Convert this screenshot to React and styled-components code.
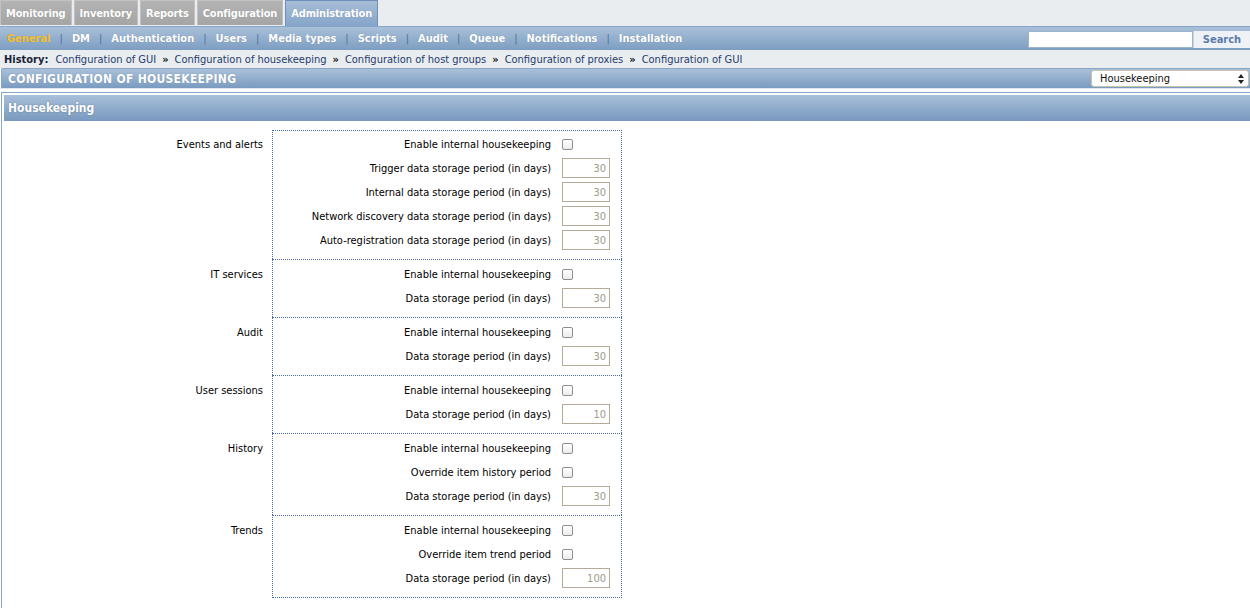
import React from "react"
import styled, { createGlobalStyle } from "styled-components"

const GlobalStyle = createGlobalStyle`
    html, body {
        margin: 0;
        padding: 0;
        background: #ffffff;
        font-family: Tahoma, "DejaVu Sans Condensed", "Liberation Sans", sans-serif;
        font-size: 11px;
        color: #000;
    }
`

const TABS = ["Monitoring", "Inventory", "Reports", "Configuration", "Administration"]
const SUBMENU = ["General", "DM", "Authentication", "Users", "Media types", "Scripts", "Audit", "Queue", "Notifications", "Installation"]
const HISTORY = ["Configuration of GUI", "Configuration of housekeeping", "Configuration of host groups", "Configuration of proxies", "Configuration of GUI"]

const SECTIONS = [
    {
        name: "Events and alerts",
        rows: [
            { label: "Enable internal housekeeping", check: true },
            { label: "Trigger data storage period (in days)", value: "30" },
            { label: "Internal data storage period (in days)", value: "30" },
            { label: "Network discovery data storage period (in days)", value: "30" },
            { label: "Auto-registration data storage period (in days)", value: "30" },
        ],
    },
    {
        name: "IT services",
        rows: [
            { label: "Enable internal housekeeping", check: true },
            { label: "Data storage period (in days)", value: "30" },
        ],
    },
    {
        name: "Audit",
        rows: [
            { label: "Enable internal housekeeping", check: true },
            { label: "Data storage period (in days)", value: "30" },
        ],
    },
    {
        name: "User sessions",
        rows: [
            { label: "Enable internal housekeeping", check: true },
            { label: "Data storage period (in days)", value: "10" },
        ],
    },
    {
        name: "History",
        rows: [
            { label: "Enable internal housekeeping", check: true },
            { label: "Override item history period", check: true },
            { label: "Data storage period (in days)", value: "30" },
        ],
    },
    {
        name: "Trends",
        rows: [
            { label: "Enable internal housekeeping", check: true },
            { label: "Override item trend period", check: true },
            { label: "Data storage period (in days)", value: "100" },
        ],
    },
]

export default function App() {
    return (
        <Page>
            <GlobalStyle />
            <TopTabs>
                {TABS.map(t => (
                    <Tab key={t} active={t === "Administration"}>{t}</Tab>
                ))}
            </TopTabs>
            <SubBar>
                <SubMenu>
                    {SUBMENU.map((s, i) => (
                        <React.Fragment key={s}>
                            {i > 0 && <Sep>|</Sep>}
                            <SubItem active={s === "General"}>{s}</SubItem>
                        </React.Fragment>
                    ))}
                </SubMenu>
                <SearchBox>
                    <SearchInput />
                    <SearchButton>Search</SearchButton>
                </SearchBox>
            </SubBar>
            <HistoryRow>
                <HistoryTitle>History:</HistoryTitle>
                {HISTORY.map((h, i) => (
                    <React.Fragment key={i}>
                        {i > 0 && <Arrow>»</Arrow>}
                        <HistoryLink>{h}</HistoryLink>
                    </React.Fragment>
                ))}
            </HistoryRow>
            <HeaderBar>
                <HeaderTitle>CONFIGURATION OF HOUSEKEEPING</HeaderTitle>
                <FakeSelect>
                    <span>Housekeeping</span>
                    <SelectArrows viewBox="0 0 6 10" width="6" height="10">
                        <path d="M3 0 L6 4 L0 4 Z" fill="#222" />
                        <path d="M3 10 L6 6 L0 6 Z" fill="#222" />
                    </SelectArrows>
                </FakeSelect>
            </HeaderBar>
            <Content>
                <Panel>
                    <PanelHeader>Housekeeping</PanelHeader>
                    <Form>
                        {SECTIONS.map((sec, si) => (
                            <Section key={sec.name}>
                                <SectionName first={si === 0}>{sec.name}</SectionName>
                                <SectionBox first={si === 0} last={si === SECTIONS.length - 1}>
                                    {sec.rows.map((r, ri) => (
                                        <Row key={ri}>
                                            <RowLabel>{r.label}</RowLabel>
                                            {r.check ? <CheckBox /> : <NumInput>{r.value}</NumInput>}
                                        </Row>
                                    ))}
                                </SectionBox>
                            </Section>
                        ))}
                    </Form>
                </Panel>
            </Content>
        </Page>
    )
}

const Page = styled.div`
    width: 1250px;
    height: 608px;
    overflow: hidden;
    background: #ffffff;
`
const TopTabs = styled.div`
    display: flex;
    height: 26px;
    background: #e9edf0;
    gap: 2px;
`
const Tab = styled.div`
    display: flex;
    align-items: center;
    height: ${props => props.active ? "26px" : "25px"};
    padding: 0 5px;
    font-weight: bold;
    letter-spacing: -0.15px;
    color: #ffffff;
    text-shadow: 0 0 1px rgba(0, 0, 0, 0.15);
    background: ${props => props.active
        ? "linear-gradient(#a6bdd6, #86a5c9)"
        : "linear-gradient(#b3b3b3, #a5a5a5)"};
    border: 1px solid ${props => props.active ? "#6f90b8" : "#c2c2c2"};
    border-bottom: none;
    box-sizing: border-box;
`
const SubBar = styled.div`
    display: flex;
    align-items: center;
    justify-content: space-between;
    height: 24px;
    background: linear-gradient(#a9c0d9, #7d9dc1);
    border-top: 1px solid #86a5c9;
    box-sizing: border-box;
`
const SubMenu = styled.div`
    display: flex;
    align-items: center;
    padding-left: 7px;
`
const SubItem = styled.span`
    font-weight: bold;
    color: ${props => props.active ? "#f5c22e" : "#ffffff"};
    text-shadow: 0 0 1px rgba(0, 0, 0, 0.2);
`
const Sep = styled.span`
    color: #4d6f9d;
    margin: 0 9px;
`
const SearchBox = styled.div`
    display: flex;
    height: 17px;
    margin-top: 1px;
`
const SearchInput = styled.div`
    width: 165px;
    background: #ffffff;
    border: 1px solid #9eb3cc;
    box-sizing: border-box;
`
const SearchButton = styled.div`
    width: 56px;
    display: flex;
    align-items: center;
    justify-content: center;
    background: #eef1f5;
    color: #5a7bab;
    font-weight: bold;
    border-left: 1px solid #c9d4e0;
`
const HistoryRow = styled.div`
    display: flex;
    align-items: center;
    height: 18px;
    padding-left: 4px;
    background: #e9edf0;
    color: #1f2f5c;
`
const HistoryTitle = styled.span`
    font-weight: bold;
    color: #1a1f3a;
    margin-right: 7px;
`
const HistoryLink = styled.span`
    color: #253a6e;
`
const Arrow = styled.span`
    font-weight: bold;
    margin: 0 6px;
    color: #111;
`
const HeaderBar = styled.div`
    display: flex;
    align-items: center;
    justify-content: space-between;
    height: 20px;
    margin-left: 1px;
    background: linear-gradient(#a9c0d9, #7a9bc0);
    border-top: 1px solid #8aa6c6;
    border-left: 1px solid #8aa6c6;
    border-radius: 2px 0 0 0;
    box-sizing: border-box;
`
const HeaderTitle = styled.span`
    font-size: 12px;
    font-weight: bold;
    letter-spacing: 0.3px;
    color: #ffffff;
    padding-left: 6px;
    text-shadow: 0 0 1px rgba(0, 0, 0, 0.2);
`
const FakeSelect = styled.div`
    display: flex;
    align-items: center;
    justify-content: space-between;
    width: 158px;
    height: 17px;
    margin-right: 1px;
    padding: 0 4px 0 8px;
    background: #ffffff;
    border: 1px solid #c8c2b0;
    border-radius: 3px;
    box-sizing: border-box;
    color: #111;
`
const SelectArrows = styled.svg`
    display: block;
`
const Content = styled.div`
    background: #ffffff;
    padding-top: 3px;
    border-top: 1px solid #dfe6ee;
`
const Panel = styled.div`
    margin-left: 1px;
    padding: 2px 0 0 2px;
    border-top: 1px solid #8aa6c6;
    border-left: 1px solid #8aa6c6;
    min-height: 520px;
`
const PanelHeader = styled.div`
    display: flex;
    align-items: center;
    height: 26px;
    padding-left: 4px;
    font-size: 12px;
    font-weight: bold;
    color: #ffffff;
    text-shadow: 0 0 2px rgba(0, 0, 0, 0.25);
    background: linear-gradient(#a9c0d9, #7899bf);
`
const Form = styled.div`
    padding-top: 9px;
`
const Section = styled.div`
    display: flex;
    align-items: flex-start;
`
const SectionName = styled.div`
    width: 259px;
    text-align: right;
    height: 24px;
    line-height: 24px;
    margin-top: ${props => props.first ? "3px" : "4px"};
    margin-right: 9px;
`
const SectionBox = styled.div`
    width: 350px;
    box-sizing: border-box;
    border-left: 1px dotted #4a6ca8;
    border-right: 1px dotted #4a6ca8;
    border-top: 1px dotted #4a6ca8;
    border-bottom: ${props => props.last ? "1px dotted #4a6ca8" : "none"};
    padding: ${props => props.first ? "1px" : "2px"} 11px 7px 0;
`
const Row = styled.div`
    display: flex;
    align-items: center;
    justify-content: flex-end;
    height: 24px;
`
const RowLabel = styled.span`
    margin-right: 11px;
`
const CheckBox = styled.span`
    display: block;
    width: 9px;
    height: 9px;
    margin-right: 37px;
    border: 1px solid #8e8e8e;
    border-radius: 2px;
    background: linear-gradient(#ffffff, #ececec);
`
const NumInput = styled.span`
    display: flex;
    align-items: center;
    justify-content: flex-end;
    width: 48px;
    height: 20px;
    box-sizing: border-box;
    padding-right: 3px;
    border: 1px solid #b3aa98;
    color: #a09a8e;
    background: #ffffff;
`
